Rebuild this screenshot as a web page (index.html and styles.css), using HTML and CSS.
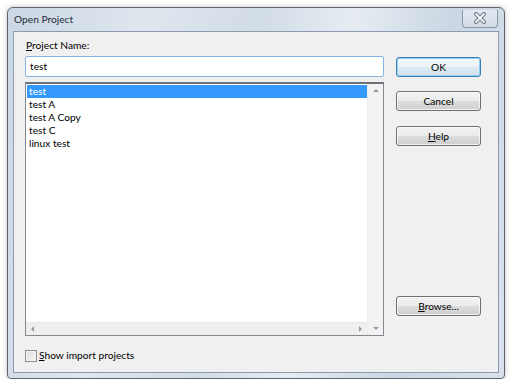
FILE: index.html
```html
<!DOCTYPE html>
<html lang="en">

<head>
    <meta charset="UTF-8">
    <meta name="viewport" content="width=device-width, initial-scale=1.0">
    <title>Open Project</title>
    <link rel="stylesheet" href="styles.css">
</head>

<body>
    <div class="window">
        <div class="titlebar">
            <span class="title">Open Project</span>
            <div class="close-btn">
                <svg width="14" height="12" viewBox="0 0 14 12">
                    <path d="M3 2 L11 10 M11 2 L3 10" stroke="#6f7a86" stroke-width="4" stroke-linecap="round" />
                    <path d="M3 2 L11 10 M11 2 L3 10" stroke="#f4f6f8" stroke-width="2" stroke-linecap="round" />
                </svg>
            </div>
        </div>

        <div class="client">
            <div class="main">
                <div class="left">
                    <label class="label" for="name"><u>P</u>roject Name:</label>
                    <div class="input">test</div>

                    <div class="listbox">
                        <div class="list-area">
                            <div class="items">
                                <div class="item selected">test</div>
                                <div class="item">test A</div>
                                <div class="item">test A Copy</div>
                                <div class="item">test C</div>
                                <div class="item">linux test</div>
                            </div>
                            <div class="hscroll">
                                <span class="arrow arrow-left"></span>
                                <span class="arrow arrow-right"></span>
                            </div>
                        </div>
                        <div class="vscroll">
                            <span class="arrow arrow-up"></span>
                            <span class="arrow arrow-down"></span>
                        </div>
                    </div>
                </div>

                <div class="right">
                    <div class="btn btn-default">OK</div>
                    <div class="btn btn-cancel">Cancel</div>
                    <div class="btn btn-help"><u>H</u>elp</div>
                    <div class="btn btn-browse"><u>B</u>rowse...</div>
                </div>
            </div>

            <div class="check-row">
                <span class="checkbox"></span>
                <span class="check-label"><u>S</u>how import projects</span>
            </div>
        </div>
    </div>
</body>

</html>
```

FILE: styles.css
```css
html {
    box-sizing: border-box;
    font-family: Lato, "Open Sans", sans-serif;
    font-size: 10.2px;
}

*,
*:before,
*:after {
    box-sizing: inherit;
}

body {
    margin: 0;
    background: #fff;
    color: #000;
}

u {
    text-decoration: underline;
    text-underline-offset: 1px;
}

/******* Ventana ********/
.window {
    margin: 7px 0 0 7px;
    width: 498px;
    height: 372px;
    border: 1px solid #5d6673;
    border-radius: 6px 6px 4px 4px;
    padding: 0 5px 5px 5px;
    background: linear-gradient(100deg, #cbd7e4 0%, #dfe6ee 25%, #d2dce7 45%, #e6ecf2 62%, #cad6e3 80%, #d9e2ec 100%);
    box-shadow: 0 0 5px rgba(0, 0, 0, 0.25);
    display: flex;
    flex-direction: column;
}

.titlebar {
    height: 23px;
    display: flex;
    align-items: center;
    justify-content: space-between;
    padding-left: 1px;
}

.title {
    color: #1e2a38;
    margin-top: -1px;
}

.close-btn {
    width: 36px;
    height: 18px;
    margin-top: -2px;
    margin-right: 1px;
    border: 1px solid #8c96a3;
    border-top: none;
    border-radius: 0 0 4px 4px;
    background: linear-gradient(#e3e9f0, #d3dce6);
    display: flex;
    align-items: center;
    justify-content: center;
}

.client {
    flex: 1;
    border: 1px solid #8c9cb0;
    background: #f0f0f0;
    padding: 6px 17px 0 11px;
    display: flex;
    flex-direction: column;
}

.main {
    display: flex;
    gap: 12px;
}

.left {
    width: 359px;
    display: flex;
    flex-direction: column;
}

.label {
    display: block;
    height: 15px;
    line-height: 15px;
    padding-left: 1px;
    margin-bottom: 3px;
}

.input {
    height: 21px;
    border: 1px solid #84b5e4;
    border-radius: 2px;
    background: #fff;
    line-height: 19px;
    padding-left: 4px;
}

/******* Lista ********/
.listbox {
    margin-top: 5px;
    height: 254px;
    border: 1px solid #828790;
    border-top: 2px solid #6d7178;
    background: #fff;
    display: flex;
}

.list-area {
    flex: 1;
    display: flex;
    flex-direction: column;
}

.items {
    flex: 1;
    padding: 1px 0 0 1px;
}

.item {
    height: 13px;
    line-height: 13px;
    padding-left: 2px;
}

.selected {
    background: #3399ff;
    color: #fff;
}

.hscroll {
    height: 13px;
    background: #efefef;
    border-top: 1px solid #e6e6e6;
    display: flex;
    align-items: center;
    justify-content: space-between;
    padding: 0 5px;
}

.vscroll {
    width: 16px;
    background: #f3f3f3;
    border-left: 1px solid #ececec;
    display: flex;
    flex-direction: column;
    align-items: center;
    justify-content: space-between;
    padding: 5px 0 5px;
}

.arrow {
    width: 0;
    height: 0;
    border: 3px solid transparent;
}

.arrow-up {
    border-bottom-color: #9a9a9a;
    border-top-width: 0;
}

.arrow-down {
    border-top-color: #9a9a9a;
    border-bottom-width: 0;
}

.arrow-left {
    border-right-color: #9a9a9a;
    border-left-width: 0;
}

.arrow-right {
    border-left-color: #9a9a9a;
    border-right-width: 0;
}

/******* Botones ********/
.right {
    width: 85px;
    display: flex;
    flex-direction: column;
}

.btn {
    height: 20px;
    border: 1px solid #707070;
    border-radius: 3px;
    background: linear-gradient(#f2f2f2 0%, #ebebeb 50%, #dddddd 50%, #cfcfcf 100%);
    box-shadow: inset 0 0 0 1px rgba(255, 255, 255, 0.7);
    text-align: center;
    line-height: 18px;
}

.btn-default {
    margin-top: 19px;
    border-color: #3c7fb1;
    box-shadow: inset 0 0 0 1px #8fd1f5;
    background: linear-gradient(#f4f9fc 0%, #eaf2f8 50%, #dde9f2 50%, #d3e2ee 100%);
}

.btn-cancel {
    margin-top: 14px;
}

.btn-help {
    margin-top: 15px;
}

.btn-browse {
    margin-top: 150px;
}

/******* Casilla ********/
.check-row {
    display: flex;
    align-items: center;
    gap: 2px;
    margin-top: 12px;
}

.checkbox {
    width: 12px;
    height: 12px;
    border: 1px solid #8e8f8f;
    background: linear-gradient(135deg, #dcdcdc, #f6f6f6);
    box-shadow: inset 0 0 0 1px #f4f4f4;
}

.check-label {
    line-height: 15px;
}
```
